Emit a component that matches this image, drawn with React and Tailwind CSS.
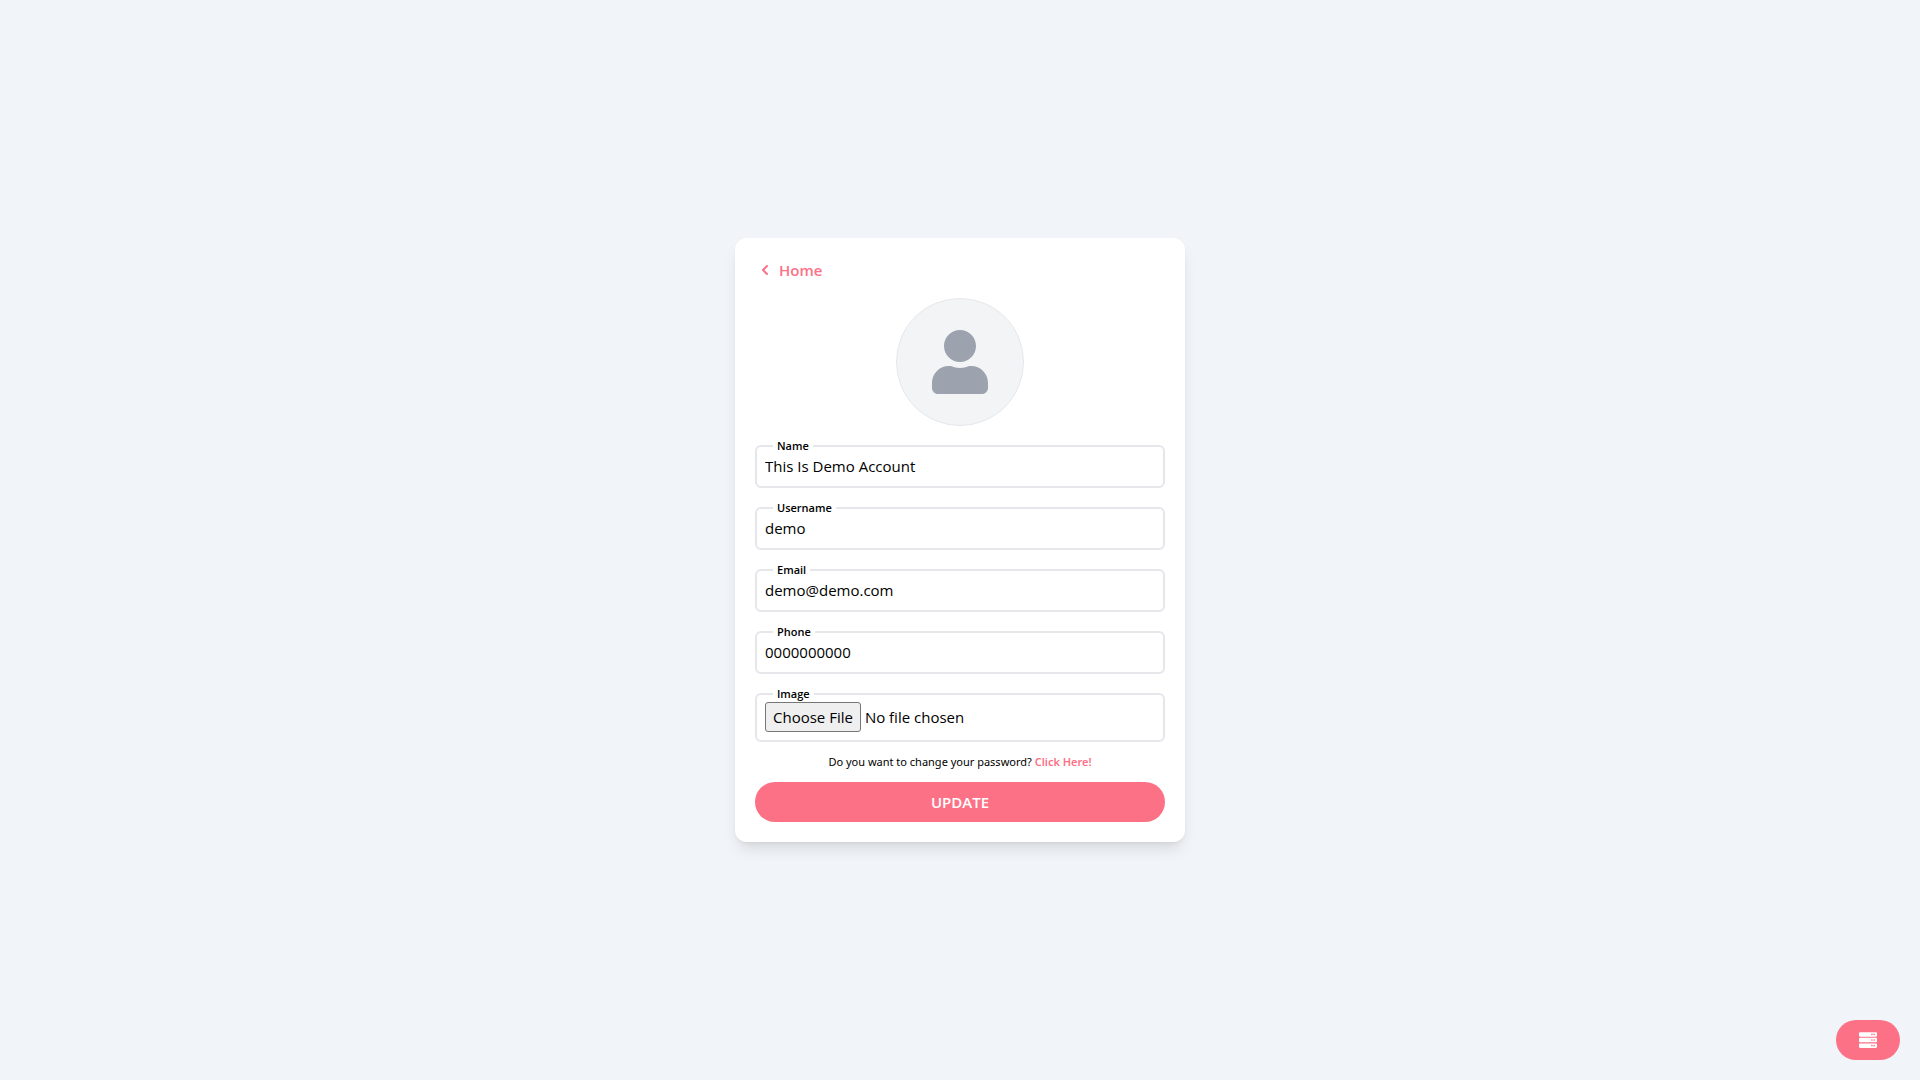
import { useState } from "react";
import { FaServer, FaUser } from "react-icons/fa";
import { HiChevronLeft } from "react-icons/hi";

const initialProfile = {
  name: "This Is Demo Account",
  username: "demo",
  email: "demo@demo.com",
  phone: "0000000000",
};

const textFields = [
  { id: "name", label: "Name", type: "text" },
  { id: "username", label: "Username", type: "text" },
  { id: "email", label: "Email", type: "email" },
  { id: "phone", label: "Phone", type: "tel" },
];

function Field({ id, label, children }) {
  return (
    <fieldset className="min-w-0 rounded-md border-2 border-[#e5e7eb] px-2 pb-2">
      <legend className="ml-2 px-1 text-[11px] leading-4 font-semibold">
        <label htmlFor={id}>{label}</label>
      </legend>
      {children}
    </fieldset>
  );
}

export default function App() {
  const [profile, setProfile] = useState(initialProfile);

  return (
    <div className="flex min-h-screen items-center justify-center bg-[#f1f5f9] font-['Segoe_UI','Open_Sans',sans-serif] text-[15px] leading-6 text-black">
      <main className="w-full max-w-[450px] rounded-xl bg-white p-5 shadow-lg">
        <a href="#home" className="mb-4 flex w-fit items-center font-semibold text-[#fd7186]">
          <HiChevronLeft className="mr-1 size-5" />
          Home
        </a>
        <form className="flex flex-col gap-3" onSubmit={(e) => e.preventDefault()}>
          <div className="flex size-32 items-center justify-center self-center rounded-full border border-[#e5e7eb] bg-[#f3f4f6]">
            <FaUser className="size-16 text-[#9ca3af]" />
          </div>
          {textFields.map(({ id, label, type }) => (
            <Field key={id} id={id} label={label}>
              <input
                id={id}
                type={type}
                value={profile[id]}
                onChange={(e) => setProfile({ ...profile, [id]: e.target.value })}
                className="block h-6 w-full outline-none"
              />
            </Field>
          ))}
          <Field id="image" label="Image">
            <input
              id="image"
              type="file"
              className="block h-[30px] w-full outline-none file:me-1 file:h-[30px] file:rounded-[3px] file:border file:border-solid file:border-[#767676] file:bg-[#efefef] file:px-[7px]"
            />
          </Field>
          <p className="text-center font-['Segoe_UI','Noto_Sans',sans-serif] text-[11px] leading-4">
            Do you want to change your password?{" "}
            <a href="#password" className="font-semibold text-[#fd7186]">
              Click Here!
            </a>
          </p>
          <button type="submit" className="h-10 rounded-full bg-[#fd7186] font-semibold text-white">
            UPDATE
          </button>
        </form>
      </main>
      <button
        type="button"
        aria-label="Menu"
        className="fixed right-5 bottom-5 flex h-10 w-16 items-center justify-center rounded-full bg-[#fd7186] text-white"
      >
        <FaServer className="size-[18px]" />
      </button>
    </div>
  );
}
